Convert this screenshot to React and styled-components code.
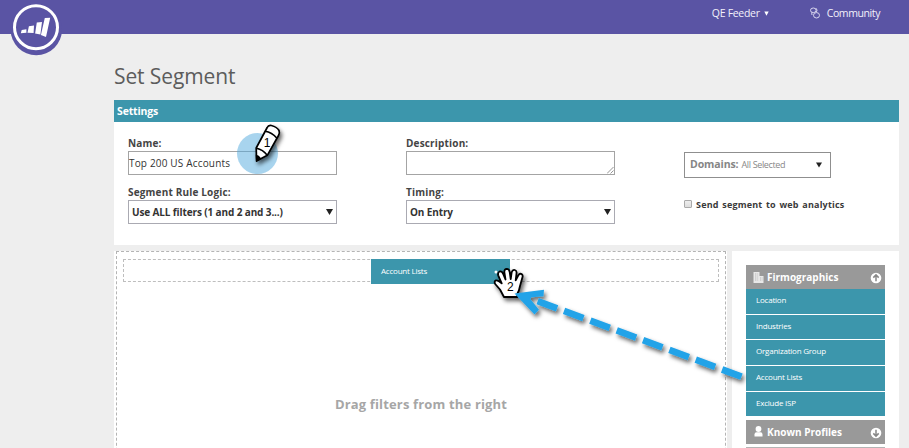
import React from "react";
import styled, { createGlobalStyle } from "styled-components";

const Global = createGlobalStyle`
  * { box-sizing: border-box; }
  body { margin: 0; background: #eeeeee; font-family: "Open Sans", "Noto Sans", sans-serif; }
`;

const Page = styled.div`
  position: relative;
  width: 909px;
  height: 448px;
  overflow: hidden;
  background: #eeeeee;
`;

const TopBar = styled.header`
  display: flex;
  justify-content: flex-end;
  height: 34px;
  padding: 5px 29px 0 0;
  background: #5a54a4;
  color: #f3f1fb;
`;

const Logo = styled.svg`
  position: absolute;
  left: 9px;
  top: 0;
`;

const NavItem = styled.div`
  display: flex;
  align-items: center;
  height: 16px;
  margin-left: ${(p) => p.$gap || 0}px;
  font-size: 10.5px;
  line-height: 16px;
  letter-spacing: ${(p) => p.$track || 0}px;
  white-space: nowrap;
  svg { flex: none; }
`;

const NavCaret = styled.svg`
  margin-left: 4px;
`;

const Content = styled.main`
  width: 785px;
  margin-left: 114px;
`;

const Title = styled.h1`
  margin: 0;
  height: 66px;
  padding-top: 28px;
  font-size: 21px;
  font-weight: 400;
  line-height: 28px;
  letter-spacing: -0.1px;
  color: #5c5c5c;
`;

const SettingsHead = styled.h2`
  margin: 0;
  height: 22px;
  padding-left: 3px;
  background: #3c96ac;
  color: #fff;
  font-size: 10.5px;
  line-height: 22px;
  font-weight: 700;
  letter-spacing: -0.15px;
`;

const SettingsBody = styled.section`
  display: grid;
  grid-template-columns: 278px 278px 1fr;
  height: 123px;
  padding: 14px 0 0 14px;
  background: #fff;
`;

const Column = styled.div`
  display: flex;
  flex-direction: column;
  align-items: flex-start;
  padding-top: ${(p) => p.$top || 0}px;
`;

const Label = styled.label`
  height: 15px;
  font-size: 10px;
  line-height: 14px;
  font-weight: 700;
  letter-spacing: 0.17px;
  color: #444;
  white-space: nowrap;
`;

const Field = styled.div`
  display: flex;
  justify-content: space-between;
  align-items: center;
  width: 209px;
  height: 24px;
  margin-bottom: 10px;
  border: 1px solid #a4a4a4;
  background: #fff;
  color: #333;
  font-size: 10px;
  letter-spacing: 0.17px;
`;

const ResizeGrip = styled.svg`
  align-self: flex-end;
  margin-left: auto;
`;

const Select = styled(Field)`
  padding: 0 3px 1px;
  border-color: #aaaab2;
  font-weight: 700;
  letter-spacing: -0.12px;
`;

const DomainSelect = styled.div`
  display: flex;
  align-items: center;
  width: 147px;
  height: 26px;
  padding: 0 8px 3px 5px;
  border: 1px solid #8f8f8f;
  color: #858585;
  font-size: 10.5px;
  font-weight: 700;
  letter-spacing: -0.1px;
  svg { margin: 3px 0 0 auto; }
`;

const DomainValue = styled.span`
  margin: 1px 0 0 3px;
  font-size: 9px;
  font-weight: 400;
  letter-spacing: -0.35px;
  color: #888;
`;

const CheckRow = styled.label`
  display: flex;
  align-items: center;
  margin-top: 19px;
  height: 14px;
  font-size: 9px;
  font-weight: 700;
  letter-spacing: 0.2px;
  word-spacing: 1px;
  color: #3a3a3a;
`;

const CheckBox = styled.span`
  width: 8px;
  height: 8px;
  margin-right: 4px;
  border: 1px solid #aaa;
  border-radius: 1px;
  background: linear-gradient(#eee, #ddd);
`;

const Workspace = styled.div`
  display: flex;
  justify-content: space-between;
  margin-top: 6px;
  height: 197px;
`;

const Canvas = styled.section`
  width: 613px;
  padding: 0 1px 0 2px;
  background: #fff;
`;

const DropZone = styled.div`
  height: 220px;
  padding: 7px 6px;
  border: 1px dashed #b4b4b4;
`;

const DropRow = styled.div`
  display: flex;
  height: 23px;
  padding-left: 247px;
  border: 1px dashed #bebebe;
`;

const DraggedFilter = styled.div`
  display: flex;
  flex: none;
  align-items: center;
  width: 139px;
  height: 25px;
  margin-top: -1px;
  padding: 0 0 3px 10px;
  background: #3c96ac;
  color: #fff;
  font-size: 8px;
  letter-spacing: -0.22px;
`;

const Hint = styled.p`
  margin: 113px 0 0;
  text-align: center;
  font-size: 13px;
  line-height: 18px;
  font-weight: 700;
  letter-spacing: 0.16px;
  color: #a6a6a6;
`;

const Sidebar = styled.aside`
  width: 167px;
  padding: 14px 14px 0;
  background: #fff;
`;

const GroupHead = styled.div`
  display: flex;
  align-items: center;
  height: 24px;
  padding: 0 3px 0 7px;
  background: #999;
  color: #fff;
  font-size: 10px;
  font-weight: 700;
  svg { flex: none; }
  svg:last-child { margin-left: auto; margin-top: 2px; }
`;

const GroupName = styled.span`
  margin-left: 3px;
  white-space: nowrap;
`;

const FilterList = styled.div`
  display: grid;
  grid-template-rows: repeat(5, 24.7px);
  row-gap: 1px;
  margin-bottom: 3.5px;
`;

const FilterItem = styled.div`
  padding-left: 10px;
  background: #3c96ac;
  color: #fff;
  font-size: 8px;
  line-height: 22px;
  letter-spacing: -0.22px;
`;

const NextGroup = styled.div`
  height: 4px;
  margin-top: 3px;
  background: #b4b4b4;
`;

const Overlay = styled.svg`
  position: absolute;
  left: 0;
  top: 0;
  pointer-events: none;
`;

const Caret = ({ w = 7 }) => (
  <svg width={w} height="6" viewBox="0 0 7 6"><path d="M0 0H7L3.5 6Z" fill="#222" /></svg>
);

const CircleArrow = ({ down }) => (
  <svg width="12" height="12" viewBox="0 0 12 12">
    <circle cx="6" cy="6" r="5.3" fill="#fff" />
    <path
      d="M6 9.2V3M3.3 5.6L6 2.9L8.7 5.6"
      transform={down ? "rotate(180 6 6)" : undefined}
      fill="none" stroke="#888" strokeWidth="1.5"
    />
  </svg>
);

const BuildingIcon = () => (
  <svg width="11" height="11" viewBox="0 0 11 11">
    <path d="M.5 0H6.5V4H10.5V11H.5Z" fill="#e8e8e8" />
    <path d="M2 2H5.5M2 4H5.5M2 6H5.5M2 8H5.5M7 6H9.5M7 8H9.5" stroke="#a5a5a5" strokeWidth=".7" strokeDasharray="1 .7" />
  </svg>
);

const PersonIcon = () => (
  <svg width="11" height="11" viewBox="0 0 11 11">
    <circle cx="5.5" cy="3" r="2.9" fill="#fff" />
    <path d="M1.5 10.5V8.4Q1.5 6.2 3.6 6.2H7.6Q9.5 6.2 9.5 8.4V10.5Z" fill="#fff" />
  </svg>
);

const filters = ["Location", "Industries", "Organization Group", "Account Lists", "Exclude ISP"];

export default function App() {
  return (
    <Page>
      <Global />
      <TopBar>
        <NavItem $track={-0.3}>
          QE Feeder
          <NavCaret width="5" height="5" viewBox="0 0 5 5"><path d="M.3 .5H4.7L2.5 4.8Z" fill="#fff" /></NavCaret>
        </NavItem>
        <NavItem $gap={41} $track={-0.4}>
          <svg width="17" height="12" viewBox="0 0 17 12" fill="none" stroke="#d9d6ef" strokeWidth="1">
            <ellipse cx="3.3" cy="3.3" rx="2.8" ry="2.3" />
            <ellipse cx="6.5" cy="8.3" rx="3" ry="2.7" />
            <path d="M6 1.2Q8 3 6.3 5.3M1.7 5.4L2 8" />
          </svg>
          Community
        </NavItem>
      </TopBar>
      <Logo width="56" height="56" viewBox="0 0 56 56">
        <circle cx="27.3" cy="29.5" r="25.7" fill="#5a54a4" />
        <circle cx="27" cy="27.2" r="21.5" fill="none" stroke="#fff" strokeWidth="3" />
        <path d="M12.7 30L17.4 29.3V32.7L11.8 33.2ZM19.9 26.2L25 25.5L24.6 33L18.5 32.7ZM27.8 22.6L33 22L31.4 34.5L26.1 33.4ZM35.8 18L41.2 17.8L37 37L31.9 35Z" fill="#fff" />
      </Logo>
      <Content>
        <Title>Set Segment</Title>
        <SettingsHead>Settings</SettingsHead>
        <SettingsBody>
          <Column>
            <Label>Name:</Label>
            <Field>Top 200 US Accounts</Field>
            <Label>Segment Rule Logic:</Label>
            <Select>Use ALL filters (1 and 2 and 3...)<Caret /></Select>
          </Column>
          <Column>
            <Label>Description:</Label>
            <Field>
              <ResizeGrip width="7" height="7" viewBox="0 0 7 7"><path d="M0 6.5L6.5 0M3.5 6.5L6.5 3.5" stroke="#888" strokeWidth=".9" /></ResizeGrip>
            </Field>
            <Label>Timing:</Label>
            <Select>On Entry<Caret /></Select>
          </Column>
          <Column $top={16}>
            <DomainSelect>Domains:<DomainValue>All Selected</DomainValue><Caret w={6} /></DomainSelect>
            <CheckRow><CheckBox />Send segment to web analytics</CheckRow>
          </Column>
        </SettingsBody>
        <Workspace>
          <Canvas>
            <DropZone>
              <DropRow><DraggedFilter>Account Lists</DraggedFilter></DropRow>
              <Hint>Drag filters from the right</Hint>
            </DropZone>
          </Canvas>
          <Sidebar>
            <GroupHead><BuildingIcon /><GroupName>Firmographics</GroupName><CircleArrow /></GroupHead>
            <FilterList>{filters.map((name) => <FilterItem key={name}>{name}</FilterItem>)}</FilterList>
            <GroupHead><PersonIcon /><GroupName>Known Profiles</GroupName><CircleArrow down /></GroupHead>
            <NextGroup />
          </Sidebar>
        </Workspace>
      </Content>
      <Overlay width="909" height="448" viewBox="0 0 909 448">
        <defs>
          <filter id="shadow" x="-20%" y="-20%" width="150%" height="150%">
            <feDropShadow dx="2" dy="3" stdDeviation="2" floodColor="#000" floodOpacity=".6" />
          </filter>
        </defs>
        <circle cx="257.5" cy="153.5" r="20.5" fill="#52a9dd" fillOpacity=".5" />
        <g filter="url(#shadow)">
          <path d="M256.2 148L267.2 127.5Q268.3 125 271.3 125.5Q277 127 279 130.5Q280 133 278.5 135.5L267.3 155.3L256.6 161Z" fill="#fff" stroke="#000" strokeWidth="1.7" strokeLinejoin="round" />
          <path d="M265 131.2Q272 132.3 276.7 138M256.5 148.3Q263 149.8 267 155" fill="none" stroke="#000" strokeWidth="1.6" />
          <path d="M255.7 154.5Q259 155 261.3 158.5L256 162Z" />
        </g>
        <text x="263.8" y="146.5" fontFamily="Liberation Sans, sans-serif" fontSize="12">1</text>
        <circle cx="496" cy="272" r="1.5" fill="#fff" />
        <g filter="url(#shadow)">
          <path d="M504 297L500 289.5L495.2 284Q493.8 281.4 496 280.4Q498 280 501.7 283.4L498.2 275.3Q497.5 272.3 499.7 271.5Q502 271.1 503.4 274.3L505.5 279.5L504.3 271.8Q504.4 268.9 506.7 268.8Q509.2 268.8 509.7 272L510.7 279L511.7 272.2Q512.6 269.4 514.8 270Q517 270.7 516.5 273.5L515.7 280.4L518.2 275.6Q519.6 273 521.6 274.1Q523.3 275.3 522.3 277.8L520 286Q519.2 291 517.3 293.7V297Z" fill="#fff" stroke="#000" strokeWidth="1.8" strokeLinejoin="round" />
        </g>
        <text x="507" y="291" fontFamily="Liberation Sans, sans-serif" fontSize="12">2</text>
        <g filter="url(#shadow)" fill="none" stroke="#24a3e8">
          <path d="M741.5 376.7L528 297.5" strokeWidth="6.7" strokeDasharray="20.7 7.4" />
          <path d="M514.5 293.5L544 289.8L543.5 296.2L529 297.5L539 309.8L534.5 314.5Z" fill="#24a3e8" stroke="none" />
        </g>
      </Overlay>
    </Page>
  );
}
